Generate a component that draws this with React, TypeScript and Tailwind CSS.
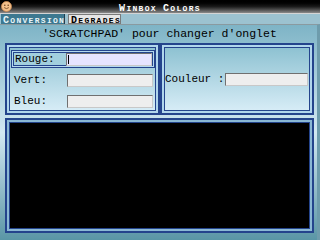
const mono = "font-['Liberation_Mono','DejaVu_Sans_Mono',monospace]";

// pixel-style small caps: first letter larger, rest smaller uppercase
function Caps({ text, className = "" }: { text: string; className?: string }) {
  return (
    <span className={`leading-none font-bold uppercase tracking-[1.3px] whitespace-pre ${className}`}>
      {text.split(" ").map((word, i) => (
        <span key={i}>
          {i > 0 && <span className="text-[8px]"> </span>}
          <span className="text-[10px]">{word[0]}</span>
          <span className="text-[8px]">{word.slice(1)}</span>
        </span>
      ))}
    </span>
  );
}

function Field({ active = false, w = "w-[86px]" }: { active?: boolean; w?: string }) {
  return (
    <div
      className={`h-[13px] ${w} shrink-0 border border-t-[#707070] border-l-[#707070] border-r-[#c8c8c8] border-b-[#c8c8c8] flex items-center ${
        active ? "bg-[#e6e4ff]" : "bg-[#eeeeee]"
      }`}
    >
      {active && <div className="ml-[1px] h-[9px] w-px bg-black" />}
    </div>
  );
}

function Row({ label, active = false }: { label: string; active?: boolean }) {
  if (active) {
    return (
      <div className="h-[18px] ml-px border border-[#24448c] p-px bg-[#b4d8ee]">
        <div className="h-full border border-[#24448c] bg-[#a2cfde] flex items-center">
          <span className="w-[52px] pl-px text-[11px] text-black">{label}</span>
          <Field active />
        </div>
      </div>
    );
  }
  return (
    <div className="h-[18px] flex items-center pl-[4px]">
      <span className="w-[53px] text-[11px] text-black">{label}</span>
      <Field />
    </div>
  );
}

function Group({ className = "", children }: { className?: string; children?: React.ReactNode }) {
  return (
    <div className={`border-2 border-[#24448c] p-[2px] bg-[#b0d6ec] ${className}`}>
      <div className="h-full border border-[#24448c] bg-gradient-to-b from-[#8ec2d2] to-[#d6ecf6]">
        {children}
      </div>
    </div>
  );
}

export default function App() {
  return (
    <div className={`w-[320px] h-[240px] flex flex-col overflow-hidden bg-black ${mono}`}>
      {/* title bar */}
      <div className="h-[13px] relative flex items-center justify-center bg-gradient-to-b from-black via-[#1a1a1a] to-[#8a8a8a]">
        <svg className="absolute left-[1px] top-[1px]" width="11" height="11" viewBox="0 0 11 11">
          <circle cx="5.5" cy="5.5" r="5" fill="#f2c08c" stroke="#c88850" strokeWidth="0.8" />
          <circle cx="3.8" cy="4.2" r="0.8" fill="#6a4020" />
          <circle cx="7.2" cy="4.2" r="0.8" fill="#6a4020" />
          <path d="M3.2 6.6 Q5.5 8.6 7.8 6.6" stroke="#6a4020" strokeWidth="0.8" fill="none" />
        </svg>
        <Caps text="WinBox Colors" className="text-white" />
      </div>
      <div className="h-px bg-[#d4d4d4]" />
      {/* tabs */}
      <div className="h-[10px] flex items-stretch gap-[3px] bg-[#9cc2d0] pl-px">
        <div className="w-[64px] pl-[2px] bg-[#3d7890] border-r border-[#1e3e50] flex items-center">
          <Caps text="Conversion" className="text-[#e8f4f8]" />
        </div>
        <div className="w-[53px] pl-[2px] bg-[#e6e6e6] border border-[#7a7a7a] flex items-center">
          <Caps text="Degrades" className="text-black" />
        </div>
      </div>
      {/* content */}
      <div className="flex-1 flex flex-col border-t border-[#8a9aa0] border-r-[3px] border-r-[#6e9cac] pl-[5px] pr-[3px] bg-gradient-to-b from-[#7eb4c6] via-[#d2e8f2] to-[#5a96a6]">
        <div className="h-[18px] flex items-center justify-center">
          <span className="text-[11.5px] text-black">'SCRATCHPAD' pour changer d'onglet</span>
        </div>
        <div className="h-[72px] flex">
          <Group className="w-[155px]">
            <div className="flex flex-col gap-[3px] pt-[2px]">
              <Row label="Rouge:" active />
              <Row label="Vert:" />
              <Row label="Bleu:" />
            </div>
          </Group>
          <Group className="w-[154px]">
            <div className="h-full flex items-center">
              <span className="w-[60px] whitespace-nowrap text-[11px] text-black">Couleur :</span>
              <Field w="w-[83px]" />
            </div>
          </Group>
        </div>
        <div className="h-[3px]" />
        <div className="h-[115px] w-[309px] border-2 border-[#24448c] p-[2px] bg-[#8ab8d4]">
          <div className="h-full border border-[#24448c] bg-black" />
        </div>
      </div>
    </div>
  );
}
